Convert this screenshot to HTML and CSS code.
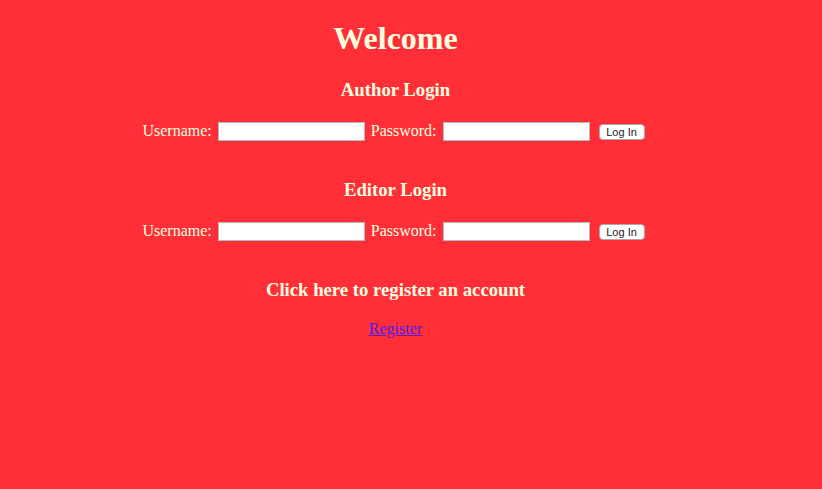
FILE: index.html
```html
<!DOCTYPE html>
<html>
<head>
<meta charset="utf-8">
<title>Welcome</title>
<link rel="stylesheet" href="styles.css">
</head>
<body>
<div class="page">
  <h1 class="title">Welcome</h1>
  <section class="block">
    <h3 class="heading">Author Login</h3>
    <form class="login-row">
      <label class="label">Username:</label>
      <input class="field" type="text">
      <label class="label">Password:</label>
      <input class="field" type="password">
      <button class="btn" type="button">Log In</button>
    </form>
  </section>
  <section class="block">
    <h3 class="heading">Editor Login</h3>
    <form class="login-row">
      <label class="label">Username:</label>
      <input class="field" type="text">
      <label class="label">Password:</label>
      <input class="field" type="password">
      <button class="btn" type="button">Log In</button>
    </form>
  </section>
  <section class="block">
    <h3 class="heading">Click here to register an account</h3>
    <a class="link" href="#">Register</a>
  </section>
</div>
</body>
</html>
```
FILE: styles.css
```css
html, body {
  margin: 0;
  padding: 0;
}
body {
  background: #ff2e37;
  color: #ffffe0;
  font-family: "Liberation Serif", "Times New Roman", serif;
  font-size: 16px;
  height: 489px;
}
.page {
  width: 791px;
  display: flex;
  flex-direction: column;
  align-items: center;
  padding-top: 20px;
}
.title {
  margin: 0;
  font-size: 32px;
  line-height: 37px;
  font-weight: bold;
}
.block {
  display: flex;
  flex-direction: column;
  align-items: center;
  margin-top: 21.7px;
}
.block + .block {
  margin-top: 37.7px;
}
.heading {
  margin: 0 0 21.3px;
  font-size: 18.72px;
  line-height: 22px;
  font-weight: bold;
}
.login-row {
  margin: 0 4px 0 0;
  display: flex;
  align-items: center;
  height: 19px;
}
.label {
  line-height: 17px;
  margin-bottom: 2px;
  white-space: nowrap;
}
.field {
  box-sizing: border-box;
  width: 147px;
  height: 19px;
  margin: 0 6px;
  padding: 0 2px;
  border: 1px solid #b7b7b7;
  border-radius: 0;
  background: #fff;
  font-size: 13px;
}
.btn {
  box-sizing: border-box;
  align-self: flex-end;
  width: 46px;
  height: 16px;
  margin: 0 0 1px 3px;
  padding: 0;
  border: 1px solid #a9a9a9;
  border-radius: 4px;
  background: #fff;
  color: #222;
  font-family: "Liberation Sans", Arial, sans-serif;
  font-size: 11px;
  line-height: 14px;
}
.heading + .link {
  margin-top: -1.7px;
}
.link {
  color: #4f1de8;
  font-size: 16px;
  line-height: 18px;
  text-decoration: underline;
}
```
